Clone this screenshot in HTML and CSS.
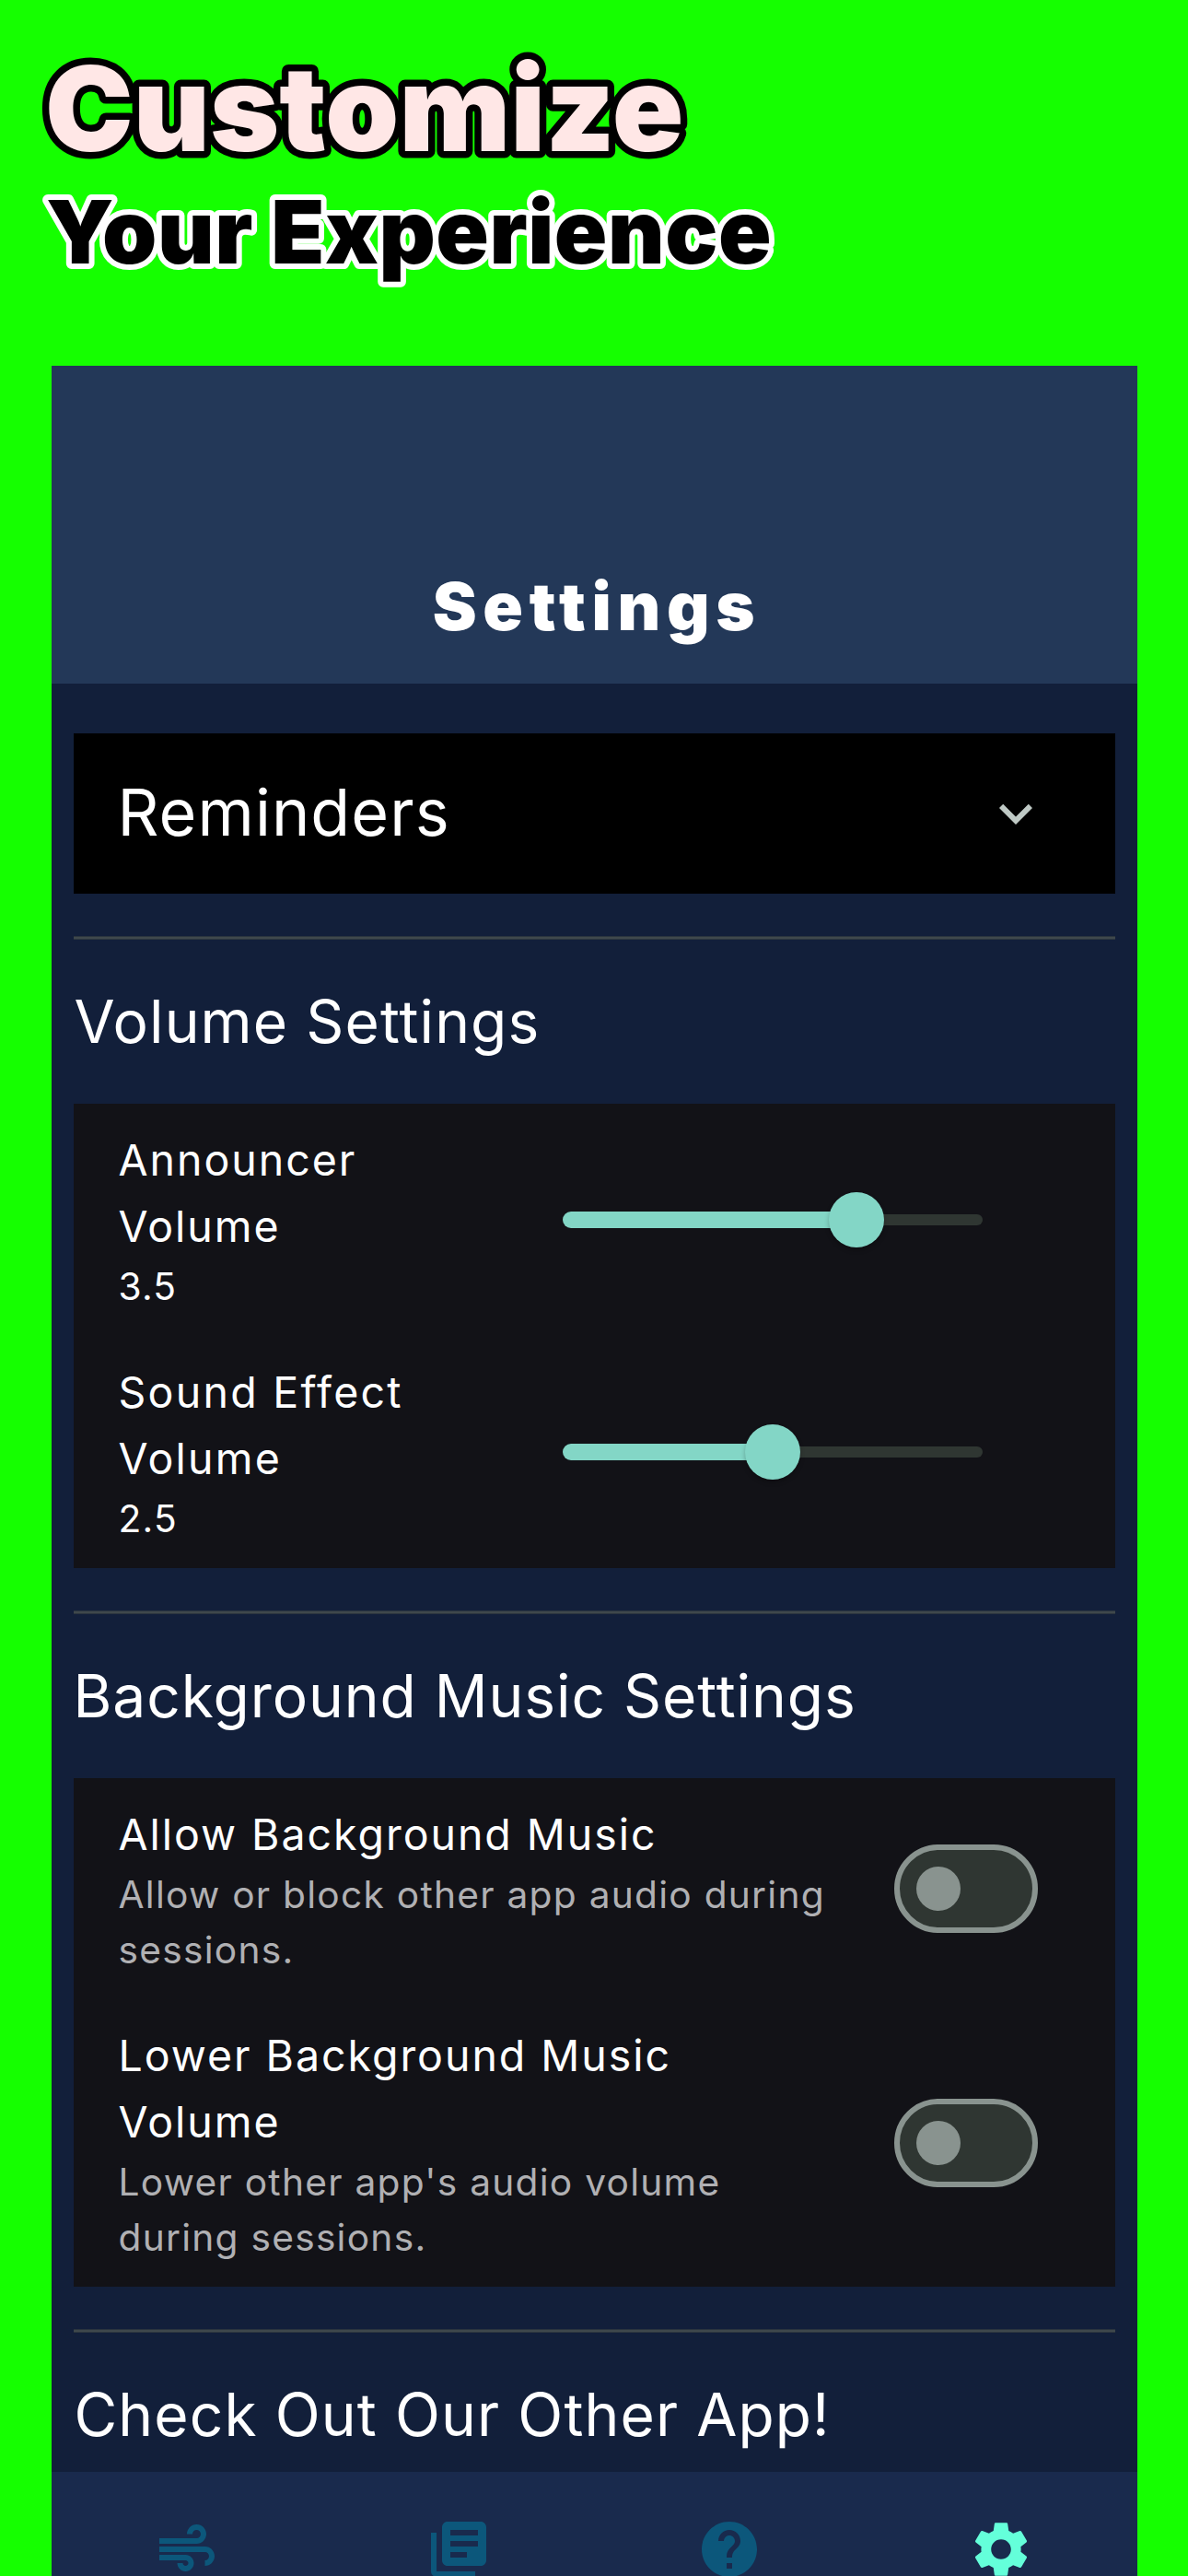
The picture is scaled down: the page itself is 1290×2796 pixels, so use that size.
FILE: index.html
```html
<!DOCTYPE html>
<html lang="en">
<head>
<meta charset="utf-8">
<title>Settings</title>
<link rel="stylesheet" href="styles.css">
</head>
<body>
<div class="page">
  <header class="promo">
    <svg class="promo-text" viewBox="0 0 1290 397" role="img">
      <text class="promo-title" x="49" y="163.5">Customize</text>
      <text class="promo-subtitle" x="50" y="286">Your Experience</text>
    </svg>
  </header>

  <main class="screen">
    <div class="app-bar"><h1 class="app-title">Settings</h1></div>

    <div class="content">
      <section class="expander">
        <h2 class="expander-title">Reminders</h2>
        <svg class="icon chevron" viewBox="0 0 24 24"><path d="M16.59 8.59L12 13.17 7.41 8.59 6 10l6 6 6-6z"/></svg>
      </section>

      <div class="divider"></div>
      <h2 class="section-title">Volume Settings</h2>
      <section class="card">
        <div class="row">
          <div class="label">
            <div class="title">Announcer<br>Volume</div>
            <div class="value">3.5</div>
          </div>
          <div class="slider">
            <div class="active" style="width: 70%"><span class="thumb"></span></div>
            <div class="inactive"></div>
          </div>
        </div>
        <div class="row">
          <div class="label">
            <div class="title effect">Sound Effect<br>Volume</div>
            <div class="value">2.5</div>
          </div>
          <div class="slider">
            <div class="active" style="width: 50%"><span class="thumb"></span></div>
            <div class="inactive"></div>
          </div>
        </div>
      </section>

      <div class="divider"></div>
      <h2 class="section-title music">Background Music Settings</h2>
      <section class="card">
        <div class="row">
          <div class="label">
            <div class="title">Allow Background Music</div>
            <div class="subtitle">Allow or block other app audio during<br>sessions.</div>
          </div>
          <div class="switch"><span class="knob"></span></div>
        </div>
        <div class="row">
          <div class="label">
            <div class="title">Lower Background Music<br>Volume</div>
            <div class="subtitle">Lower other app's audio volume<br>during sessions.</div>
          </div>
          <div class="switch"><span class="knob"></span></div>
        </div>
      </section>

      <div class="divider"></div>
      <h2 class="section-title">Check Out Our Other App!</h2>
    </div>

    <nav class="nav">
      <div class="nav-item"><svg class="icon" viewBox="0 0 24 24"><path d="M14.5 17c0 1.65-1.35 3-3 3s-3-1.35-3-3h2c0 .55.45 1 1 1s1-.45 1-1-.45-1-1-1H2v-2h9.5c1.65 0 3 1.35 3 3zM19 6.5C19 4.57 17.43 3 15.5 3S12 4.57 12 6.5h2c0-.83.67-1.5 1.5-1.5s1.5.67 1.5 1.5S16.33 8 15.5 8H2v2h13.5c1.93 0 3.5-1.57 3.5-3.5zM18.5 11H2v2h16.5c.83 0 1.5.67 1.5 1.5s-.67 1.5-1.5 1.5v2c1.93 0 3.5-1.57 3.5-3.5S20.43 11 18.5 11z"/></svg></div>
      <div class="nav-item"><svg class="icon" viewBox="0 0 24 24"><path d="M4 6H2v14c0 1.1.9 2 2 2h14v-2H4V6zm16-4H8c-1.1 0-2 .9-2 2v12c0 1.1.9 2 2 2h12c1.1 0 2-.9 2-2V4c0-1.1-.9-2-2-2zm-1 5H9V5h10v2zm0 4H9V9h10v2zm-4 4H9v-2h6v2z"/></svg></div>
      <div class="nav-item"><svg class="icon" viewBox="0 0 24 24"><path d="M12 2C6.48 2 2 6.48 2 12s4.48 10 10 10 10-4.48 10-10S17.52 2 12 2zm1 17h-2v-2h2v2zm2.07-7.75l-.9.92C13.45 12.9 13 13.5 13 15h-2v-.5c0-1.1.45-2.1 1.17-2.83l1.24-1.26c.37-.36.59-.86.59-1.41 0-1.1-.9-2-2-2s-2 .9-2 2H8c0-2.21 1.79-4 4-4s4 1.79 4 4c0 .88-.36 1.68-.93 2.25z"/></svg></div>
      <div class="nav-item current"><svg class="icon" viewBox="0 0 24 24"><path d="M19.14 12.94c.04-.3.06-.61.06-.94 0-.32-.02-.64-.07-.94l2.03-1.58c.18-.14.23-.41.12-.61l-1.92-3.32c-.12-.22-.37-.29-.59-.22l-2.39.96c-.5-.38-1.03-.7-1.62-.94l-.36-2.54c-.04-.24-.24-.41-.48-.41h-3.84c-.24 0-.43.17-.47.41l-.36 2.54c-.59.24-1.13.57-1.62.94l-2.39-.96c-.22-.08-.47 0-.59.22L2.74 8.87c-.12.21-.08.47.12.61l2.03 1.58c-.05.3-.09.63-.09.94s.02.64.07.94l-2.03 1.58c-.18.14-.23.41-.12.61l1.92 3.32c.12.22.37.29.59.22l2.39-.96c.5.38 1.03.7 1.62.94l.36 2.54c.05.24.24.41.48.41h3.84c.24 0 .44-.17.47-.41l.36-2.54c.59-.24 1.13-.56 1.62-.94l2.39.96c.22.08.47 0 .59-.22l1.92-3.32c.12-.22.07-.47-.12-.61l-2.01-1.58zM12 15.6c-1.98 0-3.6-1.62-3.6-3.6s1.62-3.6 3.6-3.6 3.6 1.62 3.6 3.6-1.62 3.6-3.6 3.6z"/></svg></div>
    </nav>
  </main>
</div>
</body>
</html>
```
FILE: styles.css
```css
* {
  box-sizing: border-box;
}

body {
  margin: 0;
  background: #15ff00;
  font-family: Inter, "Liberation Sans", sans-serif;
  color: #fff;
}

.page {
  display: flex;
  flex-direction: column;
  width: 1290px;
  height: 2796px;
  overflow: hidden;
}

.promo {
  flex: none;
  height: 397px;
}

.promo-text {
  display: block;
  width: 1290px;
  height: 397px;
}

.promo-title,
.promo-subtitle {
  font-weight: 900;
  paint-order: stroke fill;
  stroke-linejoin: round;
}

.promo-title {
  font-size: 128px;
  letter-spacing: 0.1px;
  fill: #ffe7e6;
  stroke: #000;
  stroke-width: 15px;
}

.promo-subtitle {
  font-size: 95px;
  letter-spacing: 0.52px;
  fill: #000;
  stroke: #fff;
  stroke-width: 12px;
}

.screen {
  flex: 1;
  min-height: 0;
  display: flex;
  flex-direction: column;
  margin: 0 55.5px;
  background: #121f3a;
}

.app-bar {
  flex: none;
  height: 345px;
  display: flex;
  align-items: flex-end;
  justify-content: center;
  background: #233858;
}

.app-title {
  margin: 0;
  padding-left: 6px;
  font-size: 72px;
  font-weight: 900;
  line-height: 168px;
  letter-spacing: 6.7px;
}

.content {
  flex: 1;
  min-height: 0;
  overflow: hidden;
  padding: 54px 24px 0;
}

.expander {
  height: 174px;
  padding: 0 72px 0 48px;
  display: flex;
  align-items: center;
  justify-content: space-between;
  background: #000;
}

.expander-title {
  margin: 0;
  padding-bottom: 2px;
  font-size: 70px;
  font-weight: 400;
  line-height: 96px;
  letter-spacing: 1.08px;
}

.icon {
  display: block;
  width: 72px;
  height: 72px;
  fill: currentColor;
}

.chevron {
  color: #bfc9c5;
}

.divider {
  height: 4px;
  margin: 46px 0;
  background: linear-gradient(#2b353f 1px, #3f484c 1px, #3f484c 3px, #2b353f 3px);
}

.section-title {
  margin: 0 0 0 1px;
  padding: 1px 0 47px;
  font-size: 64px;
  font-weight: 400;
  line-height: 84px;
  letter-spacing: 1.12px;
  white-space: nowrap;
}

.section-title.music {
  margin-left: 0;
  letter-spacing: 0.97px;
}

.card {
  background: #121217;
}

.row {
  display: flex;
  align-items: center;
  justify-content: space-between;
  padding: 24px 84px 24px 49px;
}

.label {
  margin: 1px 0 -1px;
  white-space: nowrap;
}

.title {
  font-size: 46.5px;
  line-height: 72px;
  letter-spacing: 1.96px;
}

.title.effect {
  letter-spacing: 2.25px;
}

.value,
.subtitle {
  font-size: 40.7px;
  line-height: 60px;
  letter-spacing: 1.25px;
}

.subtitle {
  color: #b0b0b3;
}

.slider {
  flex: none;
  display: flex;
  align-items: center;
  width: 456px;
  margin-right: 60px;
}

.active {
  position: relative;
  flex: none;
  height: 18px;
  border-radius: 9px 0 0 9px;
  background: #83d6c6;
}

.thumb {
  position: absolute;
  right: -30px;
  top: -21px;
  width: 60px;
  height: 60px;
  border-radius: 50%;
  background: #83d6c6;
  box-shadow: 0 3px 5px rgba(0, 0, 0, 0.25);
}

.inactive {
  flex: 1;
  height: 12px;
  border-radius: 0 6px 6px 0;
  background: #2f3632;
}

.switch {
  flex: none;
  display: flex;
  align-items: center;
  width: 156px;
  height: 96px;
  padding-left: 18px;
  border: 6px solid #89938f;
  border-radius: 48px;
  background: #2f3632;
}

.knob {
  width: 48px;
  height: 48px;
  border-radius: 50%;
  background: #89938f;
}

.nav {
  flex: none;
  height: 113px;
  display: flex;
  padding-top: 48px;
  overflow: hidden;
  background: #192a4d;
  color: #0c577b;
}

.nav-item {
  flex: 1;
  display: flex;
  justify-content: center;
}

.nav-item.current {
  color: #64ffda;
}
```
